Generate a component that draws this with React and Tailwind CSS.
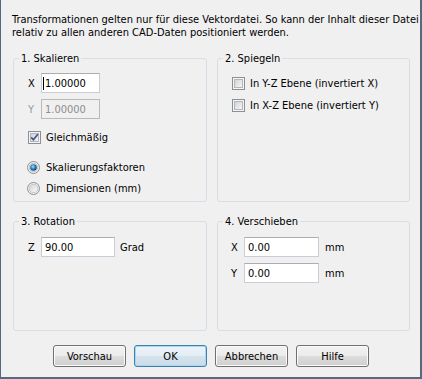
import React, { useId } from "react";

function CheckBox({ checked }) {
  const id = useId().replace(/:/g, "");
  return (
    <svg width="13" height="13" viewBox="0 0 13 13" className="shrink-0">
      <defs>
        <linearGradient id={"g" + id} x1="0" y1="0" x2="1" y2="1">
          <stop offset="0" stopColor="#cfd2d6" />
          <stop offset="1" stopColor="#f7f7f7" />
        </linearGradient>
      </defs>
      <rect x="0.5" y="0.5" width="12" height="12" fill="#f5f5f5" stroke="#8e8f8f" />
      <rect x="2.5" y="2.5" width="8" height="8" fill={`url(#g${id})`} stroke="#b3b6ba" />
      {checked && (
        <path d="M3.2 6.4 L5.4 8.8 L9.8 3.2" fill="none" stroke="#41548b" strokeWidth="1.7" />
      )}
    </svg>
  );
}

function Radio({ checked }) {
  const id = useId().replace(/:/g, "");
  return (
    <svg width="13" height="13" viewBox="0 0 13 13" className="shrink-0">
      <defs>
        <linearGradient id={"r" + id} x1="0" y1="0" x2="1" y2="1">
          <stop offset="0" stopColor="#d2d4d7" />
          <stop offset="1" stopColor="#fbfbfb" />
        </linearGradient>
        <radialGradient id={"d" + id} cx="0.42" cy="0.38" r="0.65">
          <stop offset="0" stopColor="#a9e4ff" />
          <stop offset="0.45" stopColor="#2f8fd3" />
          <stop offset="1" stopColor="#0c3766" />
        </radialGradient>
      </defs>
      <circle cx="6.5" cy="6.5" r="6" fill="#f4f4f4" stroke="#8e8f8f" />
      <circle cx="6.5" cy="6.5" r="4.3" fill={`url(#r${id})`} stroke="#b5b8bc" strokeWidth="0.8" />
      {checked && <circle cx="6.5" cy="6.5" r="3.3" fill={`url(#d${id})`} />}
    </svg>
  );
}

function Group({ title, className, children }) {
  return (
    <div className={"border border-[#d5dfe5] rounded-[3px] " + className}>
      <div className="-mt-[7px] ml-[5px] px-[2px] w-fit bg-[#f0f0f0] h-[13px]">{title}</div>
      {children}
    </div>
  );
}

function Button({ children, primary }) {
  return primary ? (
    <div className="w-[73px] h-[22px] rounded-[3px] border border-[#3c7fb1] shadow-[inset_0_0_0_1px_#a8d8f2] bg-[linear-gradient(to_bottom,#edf4f9_0%,#e3edf4_50%,#d6e3ec_50%,#cbdbe6_100%)] flex items-center justify-center">
      {children}
    </div>
  ) : (
    <div className="w-[73px] h-[22px] rounded-[3px] border border-[#707070] shadow-[inset_0_0_0_1px_#fbfbfb] bg-[linear-gradient(to_bottom,#f2f2f2_0%,#ebebeb_50%,#dddddd_50%,#cfcfcf_100%)] flex items-center justify-center">
      {children}
    </div>
  );
}

export default function App() {
  return (
    <div className="w-[422px] h-[379px] bg-[#f0f0f0] border-l border-r-2 border-b-2 border-[#57697e] text-[11px] leading-[13px] text-black font-['DejaVu_Sans_Condensed','Liberation_Sans',sans-serif] flex flex-col">
      <div className="pt-[13px] pl-[11px]">
        <div>Transformationen gelten nur für diese Vektordatei. So kann der Inhalt dieser Datei</div>
        <div>relativ zu allen anderen CAD-Daten positioniert werden.</div>
      </div>

      <div className="mt-[19px] ml-[12px] grid grid-cols-[194px_193px] grid-rows-[144px_110px] gap-x-[10px] gap-y-[19px]">
        <Group title="1. Skalieren" className="h-[144px]">
          <div className="mt-[8px] ml-[14px] flex items-center">
            <span className="w-[13px]">X</span>
            <div className="w-[59px] h-[20px] bg-white border border-[#c9ced6] border-t-[#abadb3] flex items-center pl-[1px]">
              <span className="w-[1px] h-[13px] bg-black mr-[1px]" />
              <span>1.00000</span>
            </div>
          </div>
          <div className="mt-[6px] ml-[14px] flex items-center text-[#9a9a9a]">
            <span className="w-[13px]">Y</span>
            <div className="w-[59px] h-[20px] bg-[#f0f0f0] border border-[#b9b9b9] flex items-center pl-[3px] text-[#8d8d8d]">
              1.00000
            </div>
          </div>
          <div className="mt-[12px] ml-[14px] flex items-center gap-[5px] h-[13px]">
            <CheckBox checked />
            <span>Gleichmäßig</span>
          </div>
          <div className="mt-[17px] ml-[13px] flex items-center gap-[6px] h-[13px]">
            <Radio checked />
            <span>Skalierungsfaktoren</span>
          </div>
          <div className="mt-[8px] ml-[13px] flex items-center gap-[6px] h-[13px]">
            <Radio />
            <span>Dimensionen (mm)</span>
          </div>
        </Group>

        <Group title="2. Spiegeln" className="h-[144px]">
          <div className="mt-[12px] ml-[14px] flex items-center gap-[5px] h-[13px]">
            <CheckBox />
            <span>In Y-Z Ebene (invertiert X)</span>
          </div>
          <div className="mt-[9px] ml-[14px] flex items-center gap-[5px] h-[13px]">
            <CheckBox />
            <span>In X-Z Ebene (invertiert Y)</span>
          </div>
        </Group>

        <Group title="3. Rotation" className="h-[110px]">
          <div className="mt-[9px] ml-[14px] flex items-center">
            <span className="w-[13px]">Z</span>
            <div className="w-[74px] h-[20px] bg-white border border-[#c9ced6] border-t-[#abadb3] flex items-center pl-[3px]">
              90.00
            </div>
            <span className="ml-[5px]">Grad</span>
          </div>
        </Group>

        <Group title="4. Verschieben" className="h-[110px]">
          <div className="mt-[9px] ml-[13px] flex items-center">
            <span className="w-[13px]">X</span>
            <div className="w-[75px] h-[20px] bg-white border border-[#c9ced6] border-t-[#abadb3] flex items-center pl-[3px]">
              0.00
            </div>
            <span className="ml-[6px]">mm</span>
          </div>
          <div className="mt-[6px] ml-[13px] flex items-center">
            <span className="w-[13px]">Y</span>
            <div className="w-[75px] h-[20px] bg-white border border-[#c9ced6] border-t-[#abadb3] flex items-center pl-[3px]">
              0.00
            </div>
            <span className="ml-[6px]">mm</span>
          </div>
        </Group>
      </div>

      <div className="mt-[14px] pl-[52px] flex gap-[8px]">
        <Button>Vorschau</Button>
        <Button primary>OK</Button>
        <Button>Abbrechen</Button>
        <Button>Hilfe</Button>
      </div>
    </div>
  );
}
